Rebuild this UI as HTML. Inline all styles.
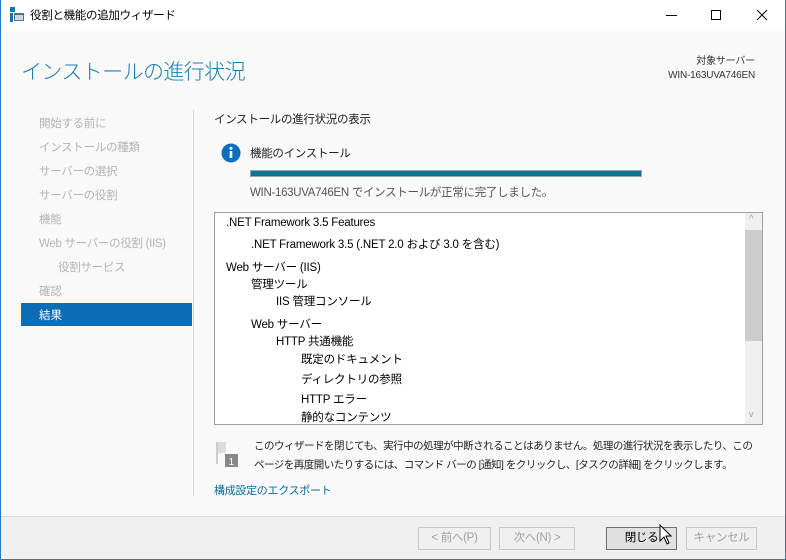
<!DOCTYPE html>
<html><head><meta charset="utf-8"><style>
*{margin:0;padding:0;box-sizing:border-box}
body{width:786px;height:560px;position:relative;overflow:hidden;font-family:"Liberation Sans","Noto Sans CJK JP",sans-serif;font-size:12px;color:#000;background:#f9f9f9}
.a{position:absolute;white-space:nowrap}
.win{position:absolute;left:0;top:0;width:786px;height:560px;border:1px solid #2b79c2;border-top:none}
.nav{color:#b4b4b4;font-size:11.5px;letter-spacing:-0.3px}
.li{font-size:11.5px;letter-spacing:-0.2px}
.btn{position:absolute;top:527px;height:23px;border:1px solid #c8c8c8;background:#f0f0f0;color:#a0a0a0;text-align:center;line-height:21px;font-size:11.5px;letter-spacing:-0.3px}
</style></head><body>
<div class="a" style="left:0;top:0;width:786px;height:31px;background:#fff"></div>
<svg class="a" style="left:9px;top:7px" width="16" height="16"><rect x="1" y="0" width="5" height="5" fill="#1d6fb8"/><rect x="1" y="6" width="3" height="9" fill="#1d6fb8"/><rect x="5" y="6" width="10" height="8" fill="#5a6e82"/><rect x="6" y="8" width="8" height="5" fill="#cfd8e0"/></svg>
<div class="a" style="left:30px;top:7px;font-size:11.5px;letter-spacing:-0.3px">役割と機能の追加ウィザード</div>
<div class="a" style="left:666px;top:15px;width:11px;height:1px;background:#000"></div>
<div class="a" style="left:711px;top:10px;width:10px;height:10px;border:1px solid #000"></div>
<svg class="a" style="left:756px;top:9px" width="12" height="12"><path d="M1 1L11 11M11 1L1 11" stroke="#000" stroke-width="1"/></svg>
<div class="a" style="left:21px;top:56px;font-size:21px;letter-spacing:-0.6px;color:#1a7db0;font-weight:300">インストールの進行状況</div>
<div class="a" style="right:31px;top:55px;font-size:10px;letter-spacing:-0.2px;color:#333;text-align:right;line-height:14px">対象サーバー<br>WIN-163UVA746EN</div>
<div class="a nav" style="left:39px;top:115px">開始する前に</div>
<div class="a nav" style="left:39px;top:139px">インストールの種類</div>
<div class="a nav" style="left:39px;top:163px">サーバーの選択</div>
<div class="a nav" style="left:39px;top:187px">サーバーの役割</div>
<div class="a nav" style="left:39px;top:211px">機能</div>
<div class="a nav" style="left:39px;top:235px">Web サーバーの役割 (IIS)</div>
<div class="a nav" style="left:58px;top:259px">役割サービス</div>
<div class="a nav" style="left:39px;top:283px">確認</div>
<div class="a" style="left:21px;top:303px;width:171px;height:23px;background:#0b6db6"></div>
<div class="a" style="left:39px;top:307px;color:#fff;font-size:11.5px">結果</div>
<div class="a" style="left:193px;top:110px;width:1px;height:386px;background:#d6d6d6"></div>
<div class="a" style="left:214px;top:111px;font-size:11.5px;letter-spacing:-0.3px;color:#222">インストールの進行状況の表示</div>
<svg class="a" style="left:221px;top:143px" width="20" height="20"><circle cx="10" cy="10" r="9.5" fill="#0b6fc0"/><rect x="8.7" y="8" width="2.6" height="7" fill="#fff"/><circle cx="10" cy="5.3" r="1.5" fill="#fff"/></svg>
<div class="a" style="left:250px;top:145px;font-size:11.5px;letter-spacing:-0.3px;color:#222">機能のインストール</div>
<div class="a" style="left:250px;top:170px;width:392px;height:7px;background:#087593;border:1px solid #9aa8ad"></div>
<div class="a" style="left:250px;top:184px;font-size:11.5px;letter-spacing:-0.3px;color:#555">WIN-163UVA746EN でインストールが正常に完了しました。</div>
<div class="a" style="left:214px;top:212px;width:549px;height:213px;border:1px solid #a0a0a0;background:#fff;overflow:hidden">
<div class="a" style="left:530px;top:0;width:17px;height:211px;background:#f0f0f0"></div>
<div class="a" style="left:530px;top:17px;width:17px;height:111px;background:#cdcdcd"></div>
<div class="a" style="left:534px;top:1px;color:#a0a0a0;font-size:10px">^</div>
<div class="a" style="left:534px;top:196px;color:#a0a0a0;font-size:9px">v</div>
<div class="a li" style="left:11px;top:4px">.NET Framework 3.5 Features</div>
<div class="a li" style="left:36px;top:23px">.NET Framework 3.5 (.NET 2.0 および 3.0 を含む)</div>
<div class="a li" style="left:11px;top:46px">Web サーバー (IIS)</div>
<div class="a li" style="left:36px;top:63px">管理ツール</div>
<div class="a li" style="left:61px;top:80px">IIS 管理コンソール</div>
<div class="a li" style="left:36px;top:103px">Web サーバー</div>
<div class="a li" style="left:61px;top:120px">HTTP 共通機能</div>
<div class="a li" style="left:86px;top:138px">既定のドキュメント</div>
<div class="a li" style="left:86px;top:158px">ディレクトリの参照</div>
<div class="a li" style="left:86px;top:178px">HTTP エラー</div>
<div class="a li" style="left:86px;top:196px">静的なコンテンツ</div>
</div>
<svg class="a" style="left:216px;top:440px" width="26" height="28"><path d="M1 2L1 24" stroke="#ccc" stroke-width="2"/><path d="M2 2L10 2L10 12L2 14Z" fill="#ddd"/><rect x="9" y="14" width="13" height="13" fill="#888"/><text x="12.5" y="25" font-size="10" fill="#fff" font-family="Liberation Sans">1</text></svg>
<div class="a" style="left:254px;top:437px;font-size:10.5px;letter-spacing:-0.5px;color:#222;line-height:19px">このウィザードを閉じても、実行中の処理が中断されることはありません。処理の進行状況を表示したり、この<br>ページを再度開いたりするには、コマンド バーの [通知] をクリックし、[タスクの詳細] をクリックします。</div>
<div class="a" style="left:214px;top:482px;font-size:11px;letter-spacing:-0.3px;color:#0a6b9a">構成設定のエクスポート</div>
<div class="a" style="left:1px;top:516px;width:784px;height:43px;background:#f0f0f0;border-top:1px solid #dcdcdc"></div>
<div class="btn" style="left:418px;width:73px">&lt; 前へ(P)</div>
<div class="btn" style="left:499px;width:76px">次へ(N) &gt;</div>
<div class="btn" style="left:606px;width:71px;color:#000;border-color:#707070;background:#e1e1e1">閉じる</div>
<div class="btn" style="left:686px;width:71px">キャンセル</div>
<svg class="a" style="left:659px;top:524px" width="14" height="22"><path d="M1 1L1 17L5 13L8 20L10 19L7 12L12 12Z" fill="#fff" stroke="#000" stroke-width="1"/></svg>
<div class="win"></div>
</body></html>
